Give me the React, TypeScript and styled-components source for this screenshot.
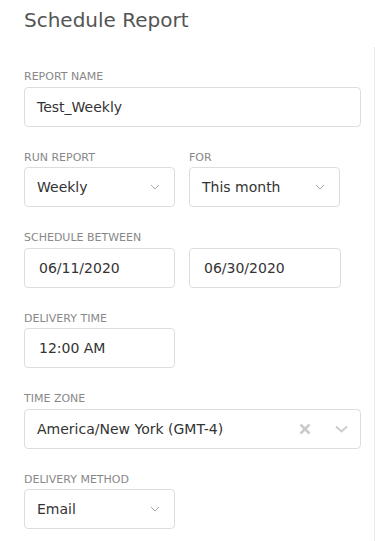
import React from "react";
import styled, { createGlobalStyle } from "styled-components";

const GlobalStyle = createGlobalStyle`
  body {
    margin: 0;
    background: #ffffff;
    font-family: "DejaVu Sans", Verdana, sans-serif;
  }
`;

const Page = styled.div`
  display: flex;
  width: 375px;
  min-height: 541px;
  box-sizing: border-box;
`;

const Main = styled.div`
  width: 374px;
  padding: 8px 13px 0 24px;
  box-sizing: border-box;
`;

const Rail = styled.div`
  width: 1px;
  margin-top: 47px;
  background: #ececec;
`;

const Title = styled.h1`
  margin: 0 0 39px;
  font-size: 20px;
  line-height: 24px;
  font-weight: normal;
  color: #555555;
`;

const Row = styled.div`
  display: flex;
  gap: 14px;
`;

const Field = styled.div<{ $width?: number }>`
  display: flex;
  flex-direction: column;
  width: ${(p) => (p.$width ? `${p.$width}px` : "100%")};
  margin-bottom: 25.1px;
`;

const Label = styled.label`
  font-size: 11px;
  line-height: 12.5px;
  color: #888888;
  margin-bottom: 3px;
  text-transform: uppercase;
`;

const Control = styled.div<{ $pad?: number; $padRight?: number }>`
  display: flex;
  align-items: center;
  height: 40px;
  box-sizing: border-box;
  border: 1px solid #dddddd;
  border-radius: 4px;
  padding: 0 ${(p) => p.$padRight ?? 14}px 0 ${(p) => p.$pad ?? 12}px;
  font-size: 14px;
  color: #333333;
  background: #ffffff;
`;

const Value = styled.span`
  flex: 1;
  white-space: nowrap;
`;

const IconSlot = styled.span<{ $gap: number }>`
  display: flex;
  align-items: center;
  margin-left: ${(p) => p.$gap}px;
`;

const Chevron = () => (
  <svg width="10" height="6" viewBox="0 0 10 6">
    <path d="M1 1 L5 5 L9 1" fill="none" stroke="#a8a8a8" strokeWidth="1" />
  </svg>
);

const BigChevron = () => (
  <svg width="13" height="8" viewBox="0 0 13 8">
    <path d="M1 1.5 L6.5 6.5 L12 1.5" fill="none" stroke="#cccccc" strokeWidth="2" />
  </svg>
);

const Clear = () => (
  <svg width="12" height="12" viewBox="0 0 12 12">
    <path d="M1.5 1.5 L10.5 10.5 M10.5 1.5 L1.5 10.5" stroke="#cacaca" strokeWidth="2.6" />
  </svg>
);

const App: React.FC = () => {
  return (
    <>
      <GlobalStyle />
      <Page>
        <Main>
          <Title>Schedule Report</Title>

          <Field>
            <Label>Report Name</Label>
            <Control>
              <Value>Test_Weekly</Value>
            </Control>
          </Field>

          <Row>
            <Field $width={151}>
              <Label>Run Report</Label>
              <Control>
                <Value>Weekly</Value>
                <Chevron />
              </Control>
            </Field>
            <Field $width={151}>
              <Label>For</Label>
              <Control>
                <Value>This month</Value>
                <Chevron />
              </Control>
            </Field>
          </Row>

          <Row>
            <Field $width={151}>
              <Label>Schedule Between</Label>
              <Control $pad={14}>
                <Value>06/11/2020</Value>
              </Control>
            </Field>
            <Field $width={152}>
              <Label>&nbsp;</Label>
              <Control $pad={14}>
                <Value>06/30/2020</Value>
              </Control>
            </Field>
          </Row>

          <Field $width={151}>
            <Label>Delivery Time</Label>
            <Control $pad={14}>
              <Value>12:00 AM</Value>
            </Control>
          </Field>

          <Field>
            <Label>Time Zone</Label>
            <Control $padRight={12}>
              <Value>America/New York (GMT-4)</Value>
              <Clear />
              <IconSlot $gap={24}>
                <BigChevron />
              </IconSlot>
            </Control>
          </Field>

          <Field $width={151}>
            <Label>Delivery Method</Label>
            <Control>
              <Value>Email</Value>
              <Chevron />
            </Control>
          </Field>
        </Main>
        <Rail />
      </Page>
    </>
  );
};

export default App;
